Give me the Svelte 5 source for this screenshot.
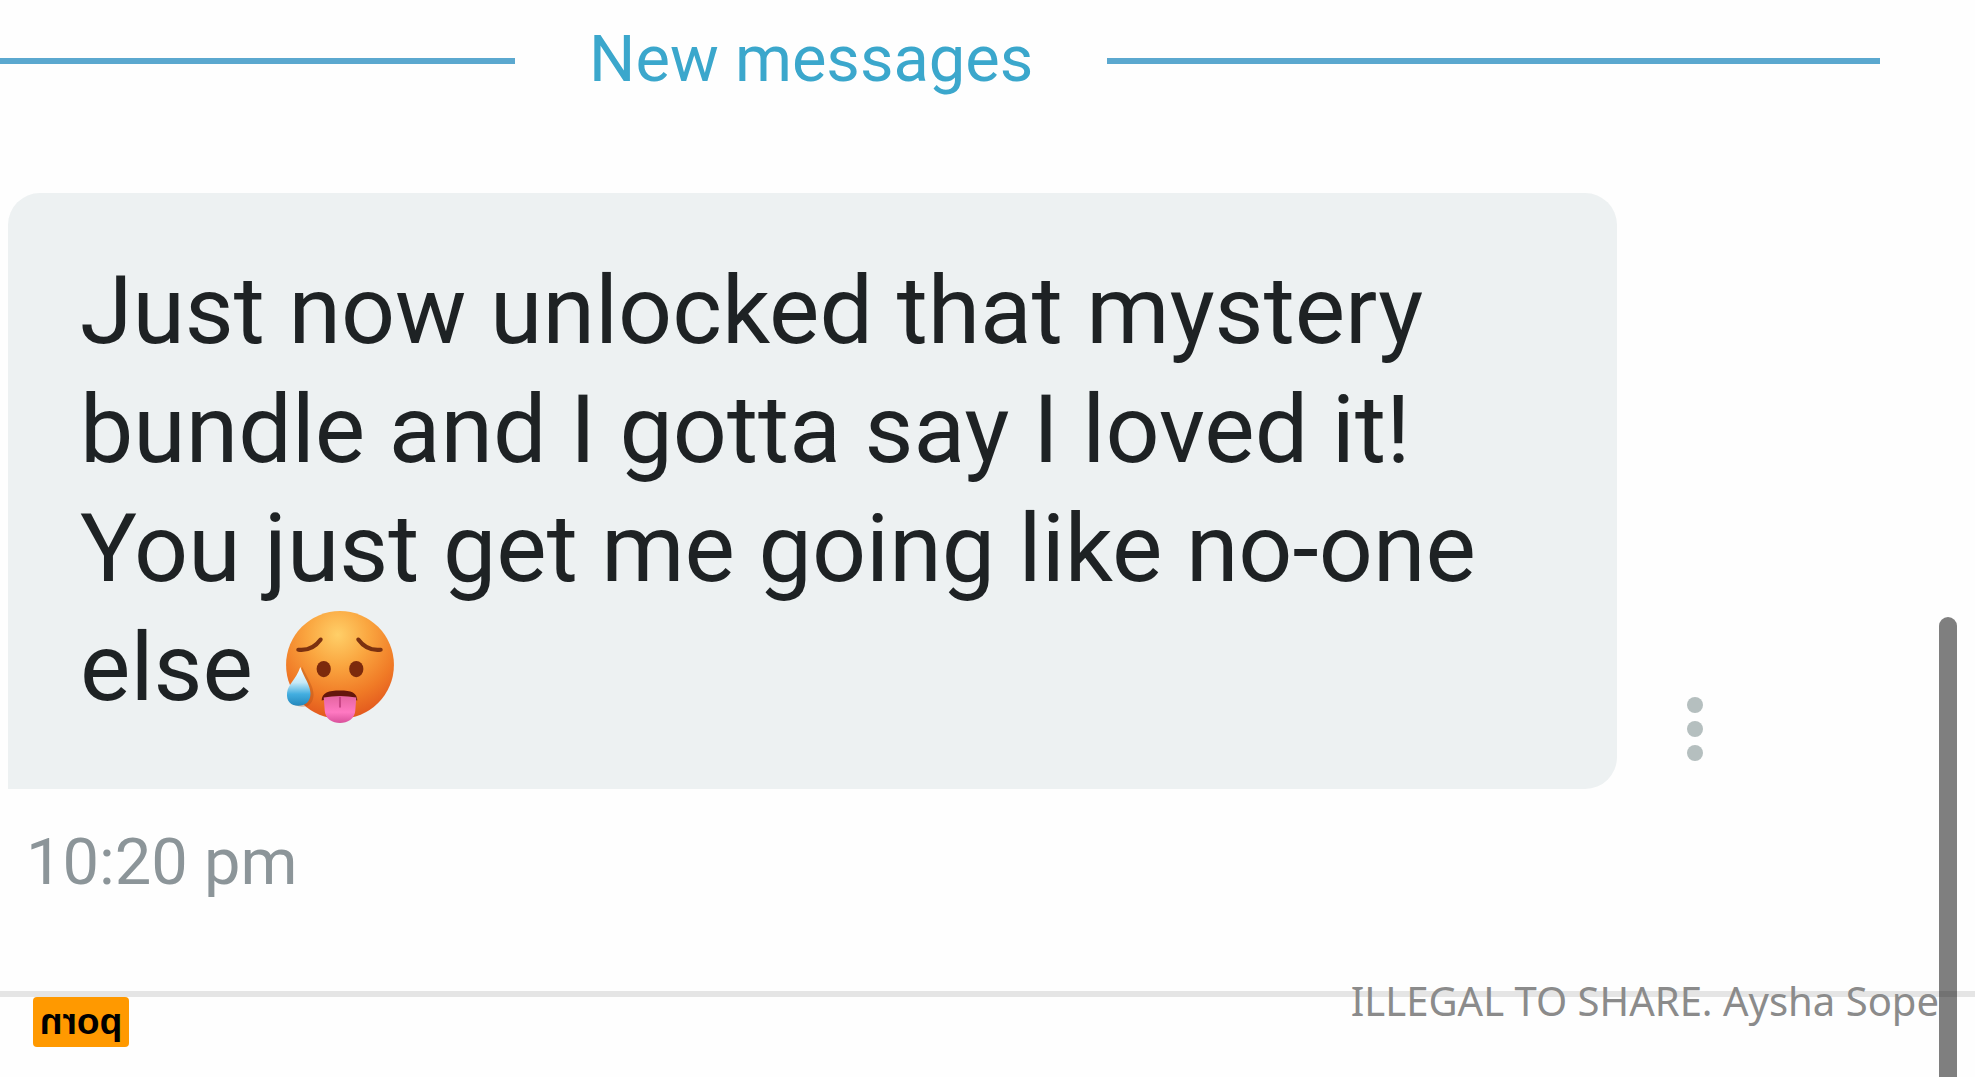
<script>
	const message = {
		text: 'Just now unlocked that mystery bundle and I gotta say I loved it! You just get me going like no-one else',
		time: '10:20 pm'
	}
	const watermark = 'ILLEGAL TO SHARE. Aysha Sope'
</script>

<div class="chat">
	<main>
		<div class="divider">
			<span class="line lineLeft"></span>
			<h2>New messages</h2>
			<span class="line lineRight"></span>
		</div>
		<div class="messageRow">
			<p class="bubble">
				{message.text}
				<svg class="emoji" viewBox="0 0 108 114" role="img" aria-label="hot face">
					<defs>
						<radialGradient id="face" cx="0.48" cy="0.22" r="0.82">
							<stop offset="0" stop-color="#ffcf68" />
							<stop offset="0.35" stop-color="#faa640" />
							<stop offset="0.7" stop-color="#f07a26" />
							<stop offset="1" stop-color="#e0521c" />
						</radialGradient>
						<linearGradient id="drop" x1="0" y1="0" x2="0" y2="1">
							<stop offset="0" stop-color="#ffffff" />
							<stop offset="0.4" stop-color="#c5e9f7" />
							<stop offset="0.7" stop-color="#43aee0" />
							<stop offset="1" stop-color="#2388bd" />
						</linearGradient>
						<linearGradient id="tongue" x1="0" y1="0" x2="0" y2="1">
							<stop offset="0" stop-color="#e565a0" />
							<stop offset="0.6" stop-color="#ff79c2" />
							<stop offset="1" stop-color="#d9519b" />
						</linearGradient>
					</defs>
					<circle cx="54" cy="55" r="53" fill="url(#face)" />
					<path d="M13 40c9 1 17-3 22-10M94 40c-9 1-17-3-22-10" fill="none" stroke="#7b3110" stroke-width="4" stroke-linecap="round" />
					<ellipse cx="38" cy="59" rx="7" ry="8" fill="#7c2a0c" />
					<ellipse cx="70" cy="59" rx="7" ry="8" fill="#7c2a0c" />
					<path d="M36 90c0-8 7-10 18-10s17 2 17 10c-11-3-24-3-35 0z" fill="#65160b" />
					<path d="M38 87q16-3 32 0l-1 13c-1 16-29 16-30 0z" fill="url(#tongue)" />
					<path d="M54 87v9" fill="none" stroke="#c84686" stroke-width="2" stroke-linecap="round" />
					<path d="M17 57c5 11 11 19 11 27 0 8-5 13-12 12S2 92 3 83c1-8 9-14 14-26z" fill="#a94b18" opacity="0.35" />
					<path d="M15 57c4 11 10 18 10 26 0 8-5 12-12 12S1 91 2 82c1-8 9-13 13-25z" fill="url(#drop)" />
				</svg>
			</p>
			<button class="menu" aria-label="Message options">
				<span></span>
				<span></span>
				<span></span>
			</button>
		</div>
		<time>{message.time}</time>
	</main>
	<footer>
		<div class="badge"><span>porn</span></div>
		<div class="watermark">{watermark}</div>
	</footer>
	<div class="scrollbar"></div>
</div>

<style>
	:global(body) {
		margin: 0;
		background-color: #fefefe;
	}
	.chat {
		position: relative;
		min-height: 100vh;
		overflow: hidden;
		font-family: Roboto, sans-serif;
	}
	.divider {
		display: flex;
		align-items: center;
		gap: 74px;
		height: 122px;
		padding-right: 95px;
	}
	.line {
		height: 6px;
		background-color: #5ba8cf;
	}
	.lineLeft {
		flex: 2;
	}
	.lineRight {
		flex: 3;
	}
	h2 {
		margin: 0;
		padding-bottom: 4px;
		font-size: 65px;
		font-weight: 400;
		line-height: 80px;
		color: #3ba7cc;
		white-space: nowrap;
	}
	.messageRow {
		display: flex;
		align-items: flex-end;
		gap: 64px;
		margin-top: 71px;
		padding: 0 266px 0 8px;
	}
	.bubble {
		flex: 1;
		margin: 0;
		padding: 58px 72px 62px;
		border-radius: 32px 32px 32px 0;
		background-color: #edf1f2;
		color: #1e2224;
		font-size: 95px;
		line-height: 119px;
	}
	.emoji {
		display: inline-block;
		width: 110px;
		height: 116px;
		margin: -8px 0 0 9px;
		vertical-align: -25px;
	}
	.menu {
		display: flex;
		flex-direction: column;
		gap: 8px;
		padding: 6px;
		margin-bottom: 22px;
		border: none;
		background: none;
		cursor: pointer;
	}
	.menu span {
		width: 16px;
		height: 16px;
		border-radius: 50%;
		background-color: #b5bfbf;
	}
	time {
		display: block;
		padding: 33px 26px 0;
		font-size: 65px;
		line-height: 80px;
		color: #8c9599;
	}
	footer {
		display: flex;
		align-items: flex-start;
		justify-content: space-between;
		margin-top: 89px;
		padding: 0 36px 0 33px;
		border-top: 6px solid #e5e5e5;
	}
	.badge {
		padding: 0 7px;
		border-radius: 4px;
		background-color: #ff9900;
		color: #000;
		font-family: "Liberation Sans", sans-serif;
		font-size: 37px;
		font-weight: 700;
		line-height: 50px;
	}
	/* the logo reads right to left */
	.badge span {
		display: block;
		transform: scaleX(-1);
	}
	.watermark {
		margin-top: -23px;
		font-family: "Noto Sans", sans-serif;
		font-size: 40px;
		line-height: 53px;
		color: #8b8b8b;
		white-space: nowrap;
	}
	.scrollbar {
		position: absolute;
		top: 617px;
		right: 18px;
		bottom: 0;
		width: 18px;
		border-radius: 9px 9px 0 0;
		background-color: rgba(0, 0, 0, 0.5);
	}
</style>
